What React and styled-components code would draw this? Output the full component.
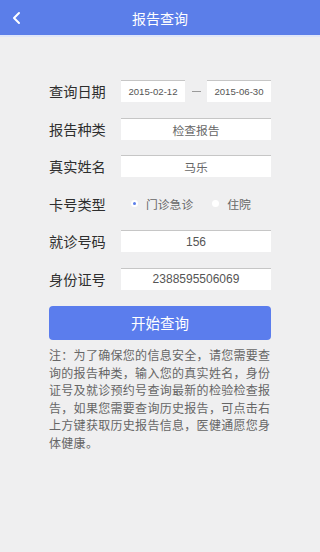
import React from 'react';
import styled, {createGlobalStyle} from 'styled-components';

const GlobalStyle = createGlobalStyle`
  html, body {
    margin: 0;
    padding: 0;
    background: #efeff0;
  }
  body {
    font-family: "Noto Sans CJK SC", "Liberation Sans", sans-serif;
  }
`;

const Page = styled.div`
  width: 320px;
  min-height: 552px;
  background: #efeff0;
`;

const Header = styled.div`
  position: relative;
  height: 35px;
  background: #5b7ee9;
  border-bottom: 2px solid #dfe6f9;
  display: flex;
  align-items: center;
  justify-content: center;
  color: #fff;
  font-size: 14px;
`;

const BackButton = styled.div`
  position: absolute;
  left: 11px;
  top: 11px;
  width: 12px;
  height: 14px;
  display: flex;
`;

const Content = styled.div`
  padding: 43px 0 0 49px;
  width: 222px;
`;

const Form = styled.div`
  display: flex;
  flex-direction: column;
  gap: 15.6px;
`;

const Row = styled.div`
  display: flex;
  align-items: center;
  height: 22px;
`;

const Label = styled.div`
  width: 72px;
  flex-shrink: 0;
  font-size: 14.2px;
  color: #2e2e2e;
  line-height: 22px;
`;

const Input = styled.div`
  width: ${(p) => p.$width || 150}px;
  height: 22px;
  box-sizing: border-box;
  background: #fff;
  border-top: 1px solid #c6c6c6;
  display: flex;
  align-items: center;
  justify-content: center;
  font-family: "Liberation Sans", "Noto Sans CJK SC", sans-serif;
  font-size: ${(p) => p.$size || 12}px;
  color: #555;
`;

const CnValue = styled.span`
  font-family: "Noto Sans CJK SC", sans-serif;
  font-size: 11.8px;
  color: #666;
`;

const Dash = styled.div`
  width: 22px;
  display: flex;
  justify-content: center;
  &::after {
    content: '';
    width: 9px;
    height: 1px;
    background: #9a9a9a;
  }
`;

const RadioGroup = styled.div`
  display: flex;
  align-items: center;
  padding-left: 10px;
`;

const RadioItem = styled.div`
  display: flex;
  align-items: center;
  margin-right: ${(p) => (p.$last ? 0 : 19)}px;
  font-size: 11.8px;
  color: #666;
`;

const RadioDot = styled.span`
  width: 7px;
  height: 7px;
  border-radius: 50%;
  background: #fff;
  margin-right: 8px;
  display: flex;
  align-items: center;
  justify-content: center;
  &::after {
    content: '';
    width: 3px;
    height: 3px;
    border-radius: 50%;
    background: ${(p) => (p.$checked ? '#5b7ee9' : 'transparent')};
  }
`;

const SubmitButton = styled.div`
  margin-top: 16px;
  height: 34px;
  border-radius: 4px;
  background: #5b7ded;
  color: #fff;
  font-size: 14.5px;
  display: flex;
  align-items: center;
  justify-content: center;
`;

const Note = styled.p`
  margin: 6px 0 0;
  font-size: 12px;
  letter-spacing: 0.3px;
  line-height: 17.6px;
  color: #666;
`;

const fields = [
  {label: '报告种类', value: '检查报告'},
  {label: '真实姓名', value: '马乐'},
];

const App = () => {
  return (
    <Page>
      <GlobalStyle />
      <Header>
        <BackButton>
          <svg width="12" height="14" viewBox="0 0 12 14">
            <polyline
              points="8,2 3,7 8,12"
              fill="none"
              stroke="#fff"
              strokeWidth="2"
              strokeLinecap="round"
              strokeLinejoin="round"
            />
          </svg>
        </BackButton>
        报告查询
      </Header>
      <Content>
        <Form>
          <Row>
            <Label>查询日期</Label>
            <Input $width={64} $size={9.6}>2015-02-12</Input>
            <Dash />
            <Input $width={64} $size={9.6}>2015-06-30</Input>
          </Row>
          {fields.map((f) => (
            <Row key={f.label}>
              <Label>{f.label}</Label>
              <Input>
                <CnValue>{f.value}</CnValue>
              </Input>
            </Row>
          ))}
          <Row>
            <Label>卡号类型</Label>
            <RadioGroup>
              <RadioItem>
                <RadioDot $checked />
                门诊急诊
              </RadioItem>
              <RadioItem $last>
                <RadioDot />
                住院
              </RadioItem>
            </RadioGroup>
          </Row>
          <Row>
            <Label>就诊号码</Label>
            <Input>156</Input>
          </Row>
          <Row>
            <Label>身份证号</Label>
            <Input>2388595506069</Input>
          </Row>
        </Form>
        <SubmitButton>开始查询</SubmitButton>
        <Note>
          注：为了确保您的信息安全，请您需要查询的报告种类，输入您的真实姓名，身份证号及就诊预约号查询最新的检验检查报告，如果您需要查询历史报告，可点击右上方键获取历史报告信息，医健通愿您身体健康。
        </Note>
      </Content>
    </Page>
  );
};

export default App;
